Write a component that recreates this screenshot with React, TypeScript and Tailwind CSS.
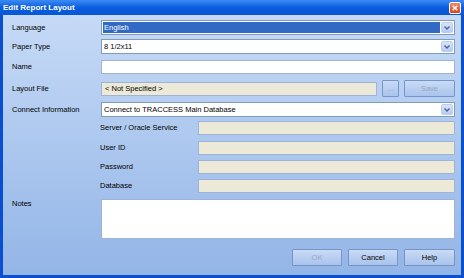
import React from 'react';

const font = { fontFamily: '"Liberation Sans", Arial, sans-serif' };

const Arrow: React.FC = () => (
  <div className="w-[12px] self-stretch my-[1px] mr-[1px] rounded-[2px] bg-gradient-to-b from-[#d8e4fb] to-[#b6cbf5] border border-[#b9cdf3] flex items-center justify-center">
    <svg width="6" height="4" viewBox="0 0 6 4">
      <path d="M0.5 0.5 L3 3 L5.5 0.5" fill="none" stroke="#4d6185" strokeWidth="1.3" />
    </svg>
  </div>
);

const Select: React.FC<{ value: string; selected?: boolean }> = ({ value, selected }) => (
  <div className="flex-1 h-[15px] border border-[#7f9db9] bg-white flex items-stretch">
    <div className={`flex-1 flex items-center m-[1px] px-[1px] ${selected ? 'bg-[#316ac5] text-white' : 'text-black'}`}>
      {value}
    </div>
    <Arrow />
  </div>
);

const Label: React.FC<{ children: React.ReactNode }> = ({ children }) => (
  <div className="w-[89px] shrink-0 text-black">{children}</div>
);

const SubRow: React.FC<{ label: string; className?: string }> = ({ label, className }) => (
  <div className={`flex items-center pl-[88px] ${className ?? ''}`}>
    <div className="w-[98px] shrink-0">{label}</div>
    <div className="flex-1 h-[14px] border border-[#9fb4d4] bg-[#ece9d8]" />
  </div>
);

const Btn: React.FC<{ label: string; disabled?: boolean }> = ({ label, disabled }) => (
  <div className={`h-[17px] border border-[#7696c8] rounded-[1px] bg-gradient-to-b from-[#c9dbf6] to-[#a9c3ec] flex items-center justify-center whitespace-nowrap ${disabled ? 'text-[#98a6bd]' : 'text-black'}`}>
    {label}
  </div>
);

export default function App() {
  return (
    <div className="w-[464px] h-[278px] bg-[#0a4fd0] flex flex-col text-[7.5px] leading-none" style={font}>
      {/* Title bar */}
      <div className="h-[15px] shrink-0 bg-gradient-to-b from-[#3b8bf5] via-[#0a5ddf] to-[#0757d6] flex items-center pl-[3px] pr-[3px]">
        <span className="flex-1 text-white font-bold text-[8px]">Edit Report Layout</span>
        <div className="w-[12px] h-[12px] rounded-[2px] border border-white bg-gradient-to-b from-[#f08a62] to-[#d8441e] flex items-center justify-center">
          <svg width="6" height="6" viewBox="0 0 6 6">
            <path d="M0.7 0.7 L5.3 5.3 M5.3 0.7 L0.7 5.3" stroke="white" strokeWidth="1.4" />
          </svg>
        </div>
      </div>

      {/* Body */}
      <div className="flex-1 mx-[3px] mb-[3px] bg-gradient-to-b from-[#c6daf6] to-[#93b5e7] flex flex-col pl-[9px] pr-[6px]">
        <div className="flex items-center mt-[5px]">
          <Label>Language</Label>
          <Select value="English" selected />
        </div>
        <div className="flex items-center mt-[4px]">
          <Label>Paper Type</Label>
          <Select value="8 1/2x11" />
        </div>
        <div className="flex items-center mt-[6px]">
          <Label>Name</Label>
          <div className="flex-1 h-[14px] border border-[#9fb4d4] bg-white" />
        </div>
        <div className="flex items-center mt-[6px] h-[17px]">
          <Label>Layout File</Label>
          <div className="flex-1 h-[14px] border border-[#9fb4d4] bg-[#ece9d8] flex items-center px-[3px]">
            &lt; Not Specified &gt;
          </div>
          <div className="w-[17px] ml-[5px]">
            <Btn label="..." disabled />
          </div>
          <div className="w-[51px] ml-[5px]">
            <Btn label="Save" disabled />
          </div>
        </div>
        <div className="flex items-center mt-[5px]">
          <Label>Connect Information</Label>
          <Select value="Connect to TRACCESS Main Database" />
        </div>
        <SubRow label="Server / Oracle Service" className="mt-[4px]" />
        <SubRow label="User ID" className="mt-[6px]" />
        <SubRow label="Password" className="mt-[5px]" />
        <SubRow label="Database" className="mt-[5px]" />
        <div className="flex items-start mt-[6px]">
          <div className="w-[89px] shrink-0 pt-[1px]">Notes</div>
          <div className="flex-1 h-[40px] border border-[#9fb4d4] bg-white" />
        </div>
        <div className="flex justify-end mt-[10px] gap-[6px]">
          <div className="w-[50px]"><Btn label="OK" disabled /></div>
          <div className="w-[50px]"><Btn label="Cancel" /></div>
          <div className="w-[51px]"><Btn label="Help" /></div>
        </div>
      </div>
    </div>
  );
}
